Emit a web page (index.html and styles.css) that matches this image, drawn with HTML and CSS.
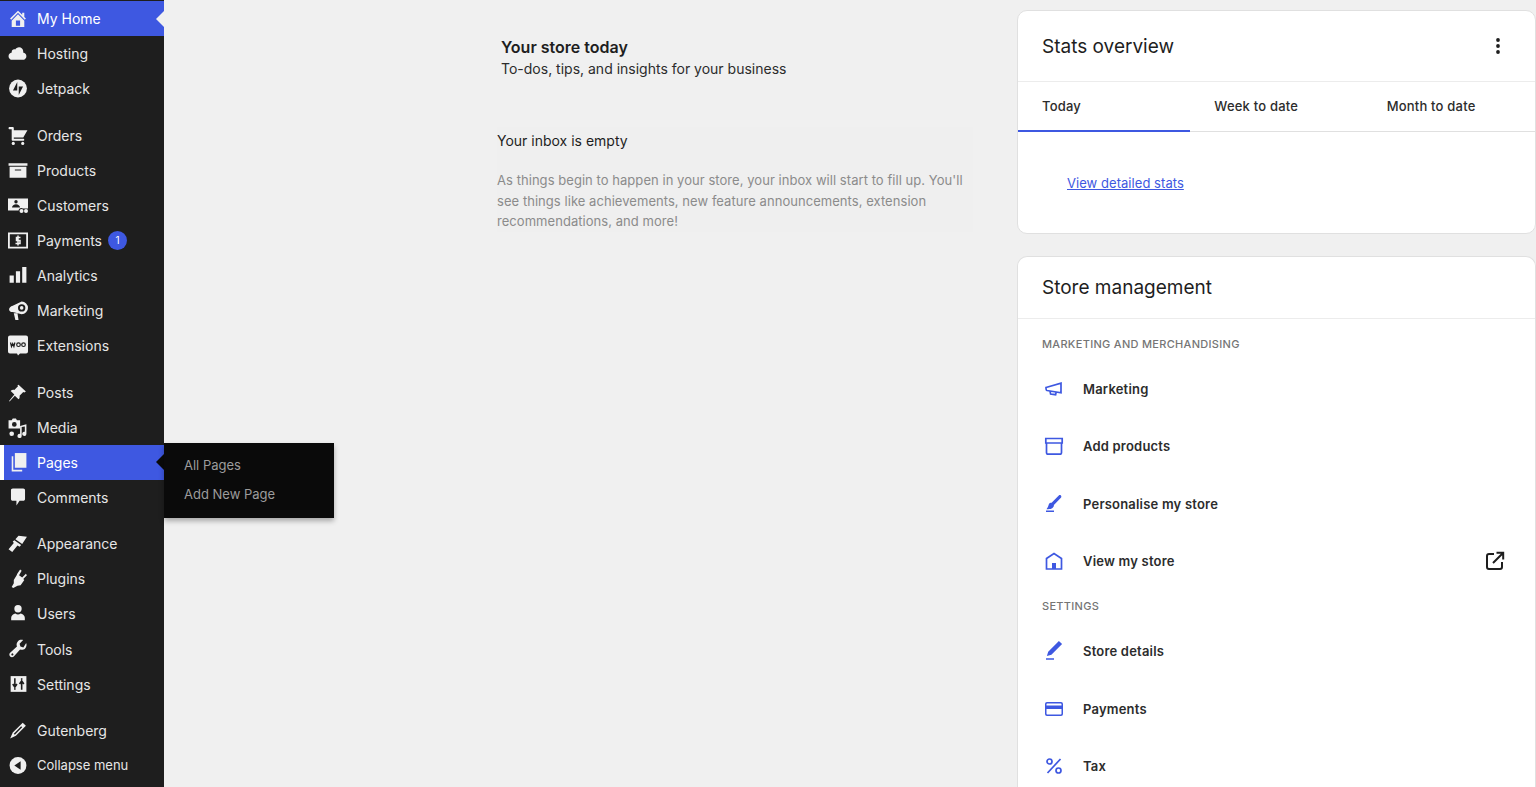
FILE: index.html
```html
<!DOCTYPE html>
<html lang="en">
<head>
  <meta charset="UTF-8" />
  <meta name="viewport" content="width=device-width, initial-scale=1" />
  <title>My Home</title>
  <link rel="stylesheet" href="styles.css">
</head>
<body>
  <div class="pagina">

    <!-- Sidebar -->
    <nav class="sidebar">
      <a class="item activo"><svg viewBox="0 0 20 20"><path d="M16 8.500l1.530 1.530-1.060 1.060L10 4.620l-6.470 6.470-1.060-1.060L10 2.500l4 4v-2h2v4zm-6-2.460l6 5.990V18H4v-5.970zM12 17v-5H8v5h4z"/></svg>My Home</a>
      <a class="item"><svg viewBox="0 0 20 20"><path d="M14.900 9c1.800.2 3.100 1.700 3.100 3.500 0 1.900-1.600 3.500-3.500 3.500h-10C2.600 16 1 14.400 1 12.500 1 10.700 2.300 9.300 4.100 9 4 8.900 4 8.700 4 8.500 4 7.100 5.100 6 6.500 6c.3 0 .7.100.9.200C8.100 4.900 9.400 4 11 4c2.200 0 4 1.800 4 4 0 .4-.1.700-.1 1z"/></svg>Hosting</a>
      <a class="item grupo"><svg viewBox="0 0 20 20"><circle cx="10" cy="10" r="8.500"/><path class="hueco" d="M9.300 3.700v8.200H5.200zM10.700 16.300V8.100h4.100z"/></svg>Jetpack</a>

      <a class="item"><svg viewBox="0 0 20 20"><path d="M6 13h9c.55 0 1 .45 1 1s-.45 1-1 1H5c-.55 0-1-.45-1-1V4H2c-.55 0-1-.45-1-1s.45-1 1-1h3c.55 0 1 .45 1 1v2h13l-4 7H6v1z"/><circle cx="5.500" cy="17.500" r="1.500"/><circle cx="14.500" cy="17.500" r="1.500"/></svg>Orders</a>
      <a class="item"><svg viewBox="0 0 20 20"><path d="M19 3v2.500H1V3zM2 6.500h16V17H2zM7 9v1h6V9z" fill-rule="evenodd"/></svg>Products</a>
      <a class="item"><svg viewBox="0 0 22 20"><path d="M1 3h20v10h-5a3 3 0 0 0-4.500 2H1z"/><circle class="hueco" cx="9" cy="6.300" r="1.700"/><path class="hueco" d="M5 12c0-2 2-3.300 4-3.300s4 1.300 4 3.300z"/><circle cx="14.500" cy="15.500" r="2"/><circle cx="19" cy="15.500" r="2"/></svg>Customers</a>
      <a class="item"><svg viewBox="0 0 22 20"><path d="M1 2h20v16H1zM2.800 3.800v12.400h16.400V3.800z" fill-rule="evenodd"/><path class="trazo" d="M13.500 7h-4v3h3.500v3H8.500M11 5v10"/></svg>Payments<span class="globo">1</span></a>
      <a class="item"><svg viewBox="0 0 20 20"><path d="M2 10h4v7H2zM8 6h4v11H8zM14 2h4v15h-4z"/></svg>Analytics</a>
      <a class="item"><svg viewBox="0 0 20 20"><path d="M13.500 1.500a6 6 0 0 1 0 12L5 11.500c-2 0-3.500-1-3.500-2.500S3 6 5 5.500zm0 2.500a3.500 3.500 0 1 0 0 7 3.500 3.500 0 0 0 0-7zM6 12.500h3.500L10.500 19H7.500z" fill-rule="evenodd"/><circle cx="13.500" cy="7.500" r="1.700"/></svg>Marketing</a>
      <a class="item grupo"><svg viewBox="0 0 22 20"><path d="M3 0h16a2 2 0 0 1 2 2v14a2 2 0 0 1-2 2h-6l-2 2-1-2H3a2 2 0 0 1-2-2V2a2 2 0 0 1 2-2z"/><path class="trazo oscuro" d="M3.500 7l1 4 1.200-3 1.200 3 1-4"/><circle class="aro" cx="11.500" cy="9.200" r="1.800"/><circle class="aro" cx="16.500" cy="9.200" r="1.800"/></svg>Extensions</a>

      <a class="item"><svg viewBox="0 0 20 20"><path d="M10.500 2.500l7 6.500-1.500 1-1-.5-3.500 3.500c.3 1.500 0 2.500-1 3.500L7 13l-5 5.500-.5-.5L6.500 12 3 8.500c1-1 2.200-1.300 3.500-1L10 4l-.5-1z"/></svg>Posts</a>
      <a class="item"><svg viewBox="0 0 20 20"><path d="M1 3h3l1-1.500h3L9 3h3v8H1zm5.500 1.800a2 2 0 1 0 0 4.500 2 2 0 0 0 0-4.500z" fill-rule="evenodd"/><path d="M18 7v9a2 2 0 1 1-1.500-1.900V9l-3 .6V18a2 2 0 1 1-1.500-1.900v-7.600z"/><circle cx="4" cy="16" r="2.200"/></svg>Media</a>
      <a class="item activo conSub"><svg viewBox="0 0 20 20"><path d="M7 1h11v14H7z"/><path d="M4 4h1.500v13H14V18.500H4z"/></svg>Pages</a>
      <div class="submenu">
        <a>All Pages</a>
        <a>Add New Page</a>
      </div>
      <a class="item grupo"><svg viewBox="0 0 20 20"><path d="M5 1.500h10c1 0 1.700.7 1.700 1.700v8.300c0 1-.7 1.700-1.700 1.700h-3.500L8.500 17.500v-4.300H5c-1 0-1.700-.7-1.700-1.700V3.200c0-1 .7-1.700 1.700-1.700z"/></svg>Comments</a>

      <a class="item"><svg viewBox="0 0 20 20"><path d="M10.500 2.500l8 1-4.500 7-6.500-4.500zM6.500 7l6.500 4.500-1.500 1.500-2-1.200-5 6.200-3.500-2.500 5-6-1-1.500z"/></svg>Appearance</a>
      <a class="item"><svg viewBox="0 0 20 20"><path d="M12 1.500l1.500 1L11 7l3 2 3.500-3.500 1 1.500-3.500 3.500 1 1-3.500 5-3 .5-4 2-1.500-1 2-3.500 0-3 3-5L9 6z"/></svg>Plugins</a>
      <a class="item"><svg viewBox="0 0 20 20"><circle cx="10" cy="5.500" r="3.500"/><path d="M3.500 16.500v-2.500c0-2 2-3.500 4-4 .8.700 1.600 1 2.500 1s1.700-.3 2.500-1c2 .5 4 2 4 4v2.500z"/></svg>Users</a>
      <a class="item"><svg viewBox="0 0 20 20"><path d="M17.800 4.800c.7 1.800.3 3.800-1 5.100-1.300 1.300-3.200 1.700-4.800 1.100L6 17.500c-1 1-2.500 1-3.500 0s-1-2.500 0-3.500L9 8c-.7-1.700-.3-3.700 1-5 1.300-1.300 3.200-1.700 4.900-1l-3.400 3.400.8 2.800 2.800.8zM4.300 14.700a1 1 0 1 0 1 1.700 1 1 0 0 0-1-1.700z" fill-rule="evenodd"/></svg>Tools</a>
      <a class="item grupo"><svg viewBox="0 0 20 20"><path d="M3 2h15v15H3z"/><path class="trazo oscuro grueso" d="M7 4v8M5 9.500l2 3 2-3M13.500 15V7M11.500 9.500l2-3 2 3M7 13.500V15M13.500 4v1.500"/></svg>Settings</a>

      <a class="item"><svg viewBox="0 0 20 20"><path d="M14.500 2.500l3 3-9.500 9.500-5.500 2.500 2.500-5.500zM13 6l-7 7 1 1 7-7z" fill-rule="evenodd"/></svg>Gutenberg</a>
      <a class="item pequeno"><svg viewBox="0 0 20 20"><circle cx="10" cy="10" r="8"/><path class="hueco" d="M12.500 6v8l-6-4z"/></svg>Collapse menu</a>
    </nav>

    <!-- Columna central -->
    <main class="centro">
      <div class="cabecera">
        <h1>Your store today</h1>
        <p>To-dos, tips, and insights for your business</p>
      </div>
      <section class="inbox">
        <h2>Your inbox is empty</h2>
        <p>As things begin to happen in your store, your inbox will start to fill up. You'll see things like achievements, new feature announcements, extension recommendations, and more!</p>
      </section>
    </main>

    <!-- Columna derecha -->
    <aside class="derecha">
      <section class="tarjeta">
        <div class="titulo stats">
          <h3>Stats overview</h3>
          <svg class="puntos" viewBox="0 0 4 18"><circle cx="2" cy="3" r="1.900"/><circle cx="2" cy="9" r="1.900"/><circle cx="2" cy="15" r="1.900"/></svg>
        </div>
        <div class="pestanas">
          <a class="sel">Today</a>
          <a>Week to date</a>
          <a>Month to date</a>
        </div>
        <div class="detalle"><a>View detailed stats</a></div>
      </section>

      <section class="tarjeta gestion">
        <div class="titulo titulo-gestion">
          <h3>Store management</h3>
        </div>
        <div class="lista">
          <div class="etiqueta">MARKETING AND MERCHANDISING</div>
          <a class="fila"><svg viewBox="0 0 24 24" class="azul"><path class="linea" d="M4 10.500l15-4.300v9.600l-11-1.800-3-.5c-1-.2-1-2.600-1-3zM8 14l.6 3 5 .7.600-2.700"/></svg>Marketing</a>
          <a class="fila"><svg viewBox="0 0 24 24" class="azul"><path class="linea" d="M4.500 9v9.500c0 1 .7 1.700 1.700 1.700h11.600c1 0 1.700-.7 1.700-1.700V9M3.800 4.500h16.400v4.500H3.800z"/></svg>Add products</a>
          <a class="fila"><svg viewBox="0 0 24 24" class="azul"><path d="M4 20h8v-1.500H4zM18.900 3.500c-.6-.6-1.500-.6-2.100 0l-7.200 7.200c-.4-.1-.7 0-1.100.1-.5.2-1.500.7-1.900 2.200-.4 1.700-.8 2.200-1.100 2.700-.1.100-.2.300-.3.400l-.6 1.100H6c2 0 3.500-.4 4.500-1.200 1-.8 1.500-1.800 1.400-3l7-7.200c.6-.6.6-1.700 0-2.300z"/></svg>Personalise my store</a>
          <a class="fila"><svg viewBox="0 0 24 24" class="azul"><path class="linea" d="M4.500 9.500L12 4.500l7.500 5V20h-15z"/><path d="M10 14h4v6h-4z"/></svg>View my store<svg viewBox="0 0 24 24" class="externo"><path class="linea" d="M11 5H6a2 2 0 0 0-2 2v11a2 2 0 0 0 2 2h11a2 2 0 0 0 2-2v-5M10 14l9.500-9.500M13.500 3.800h6.700v6.700"/></svg></a>

          <div class="etiqueta">SETTINGS</div>
          <a class="fila"><svg viewBox="0 0 24 24" class="azul"><path d="M20.100 5.100L16.900 2 6.200 12.700l-1.300 4.400 4.500-1.300zM4 20.800h8v-1.500H4z"/></svg>Store details</a>
          <a class="fila"><svg viewBox="0 0 24 24" class="azul"><path d="M5 5h14a2 2 0 0 1 2 2v10a2 2 0 0 1-2 2H5a2 2 0 0 1-2-2V7a2 2 0 0 1 2-2zm-.5 7v4.800c0 .4.300.7.700.7h13.600c.4 0 .7-.3.700-.7V12zm0-4.800V8.500h15V7.200c0-.4-.3-.7-.7-.7H5.200c-.4 0-.7.300-.7.700z" fill-rule="evenodd"/></svg>Payments</a>
          <a class="fila"><svg viewBox="0 0 24 24" class="azul"><path class="linea" d="M18.500 5L5.500 19"/><circle class="linea" cx="7.500" cy="7.500" r="2.500"/><circle class="linea" cx="16.500" cy="16.500" r="2.500"/></svg>Tax</a>
        </div>
      </section>
    </aside>
  </div>
</body>
</html>
```

FILE: styles.css
```css
* {
  margin: 0;
  padding: 0;
  box-sizing: border-box;
}

html, body {
  height: 100%;
  overflow: hidden;
  font-family: Inter, "Liberation Sans", sans-serif;
  background-color: #f0f0f0;
  color: #1e1e1e;
}

.pagina {
  display: flex;
  height: 787px;
  overflow: hidden;
}

/* Sidebar */
.sidebar {
  position: relative;
  flex: 0 0 164px;
  padding-top: 1px;
  background-color: #1e1e1e;
}

.item {
  position: relative;
  display: flex;
  align-items: center;
  height: 35.1px;
  padding-left: 37px;
  font-size: 14px;
  color: #e6e6e6;
}

.item svg {
  position: absolute;
  left: 7px;
  top: 7px;
  width: 22px;
  height: 21px;
  fill: #f0f0f0;
}

.item .hueco {
  fill: #1e1e1e;
}

.item .trazo {
  fill: none;
  stroke: #f0f0f0;
  stroke-width: 1.500;
}

.item .oscuro {
  stroke: #1e1e1e;
  stroke-width: 1.200;
}

.item .grueso {
  stroke-width: 1.500;
}

.item .aro {
  fill: none;
  stroke: #1e1e1e;
  stroke-width: 1.200;
}

.grupo {
  margin-bottom: 11.300px;
}

.pequeno {
  height: 33px;
  font-size: 13px;
}

.activo {
  background-color: #3e58e1;
  color: #fff;
}

.activo::after {
  content: "";
  position: absolute;
  right: 0;
  top: 50%;
  margin-top: -8px;
  border: 8px solid transparent;
  border-right-color: #f0f0f0;
  border-left-width: 0;
}

.conSub {
  border-left: 4px solid #fff;
  padding-left: 33px;
}

.conSub svg {
  left: 3px;
}

.conSub::after {
  border-right-color: #0a0a0a;
}

.globo {
  display: inline-flex;
  justify-content: center;
  align-items: center;
  width: 19px;
  height: 19px;
  margin-left: 6px;
  border-radius: 50%;
  background-color: #3e58e1;
  font-size: 10px;
  color: #fff;
}

.submenu {
  position: absolute;
  left: 164px;
  top: 443px;
  width: 170px;
  height: 75px;
  padding-top: 8px;
  background-color: #0a0a0a;
  box-shadow: 0 3px 5px rgba(0,0,0,0.3);
  z-index: 2;
}

.submenu a {
  display: block;
  height: 29px;
  line-height: 29px;
  padding-left: 20px;
  font-size: 13px;
  color: #9c9c9c;
}

/* Columna central */
.centro {
  flex: 0 0 853px;
  padding: 38px 44px 0 333px;
}

.cabecera {
  padding-left: 4px;
}

.cabecera h1 {
  font-size: 16px;
  line-height: 19px;
  font-weight: 600;
}

.cabecera p {
  font-size: 14px;
  line-height: 24px;
  color: #2c2c2c;
}

.inbox {
  margin-top: 46px;
  height: 105px;
  background-color: #efefef;
}

.inbox h2 {
  padding-top: 3px;
  font-size: 14px;
  line-height: 22px;
  font-weight: 400;
}

.inbox p {
  margin-top: 18px;
  font-size: 13px;
  line-height: 20.500px;
  letter-spacing: 0.05px;
  color: #8b8b8b;
}

/* Columna derecha */
.derecha {
  flex: 0 0 519px;
  padding-top: 10px;
}

.tarjeta {
  background-color: #fff;
  border: 1px solid #e0e0e0;
  border-radius: 10px;
  height: 224px;
}

.gestion {
  margin-top: 22px;
  height: 560px;
  border-bottom: none;
  border-radius: 10px 10px 0 0;
}

.titulo {
  display: flex;
  justify-content: space-between;
  align-items: center;
  padding: 0 24px;
  border-bottom: 1px solid #ececec;
}

.stats {
  height: 71px;
}

.titulo-gestion {
  height: 61.500px;
  padding-top: 1px;
}

.titulo h3 {
  font-size: 19px;
  font-weight: 400;
}

.puntos {
  width: 4px;
  height: 18px;
  margin-right: 11px;
  fill: #1e1e1e;
}

.pestanas {
  display: grid;
  grid-template-columns: repeat(3, 1fr);
  height: 50px;
  border-bottom: 1px solid #e0e0e0;
}

.pestanas a {
  display: flex;
  align-items: center;
  padding: 0 0 1px 24px;
  font-size: 13px;
  font-weight: 500;
  letter-spacing: 0.2px;
  color: #2c2c2c;
}

.pestanas .sel {
  padding-bottom: 0;
  border-bottom: 2px solid #3e58e1;
  margin-bottom: -1px;
}

.detalle {
  padding: 40px 0 0 49px;
}

.detalle a {
  font-size: 13px;
  letter-spacing: 0.05px;
  color: #3e58e1;
  text-decoration: underline;
}

.lista {
  padding-top: 9px;
}

.etiqueta {
  height: 32.500px;
  line-height: 32.500px;
  padding-left: 24px;
  font-size: 11px;
  font-weight: 500;
  letter-spacing: 0.3px;
  color: #757575;
}

.fila {
  display: flex;
  align-items: center;
  gap: 17px;
  height: 57.500px;
  padding: 0 28px 0 24px;
  font-size: 13px;
  font-weight: 600;
  letter-spacing: 0.2px;
  color: #2c2c2c;
}

.fila svg {
  flex: 0 0 24px;
  width: 24px;
  height: 24px;
}

.azul {
  fill: #3e58e1;
}

.linea {
  fill: none;
  stroke-width: 1.700;
}

.azul .linea {
  stroke: #3e58e1;
}

.externo {
  margin-left: auto;
}

.externo .linea {
  stroke: #1e1e1e;
  stroke-width: 2;
}
```
